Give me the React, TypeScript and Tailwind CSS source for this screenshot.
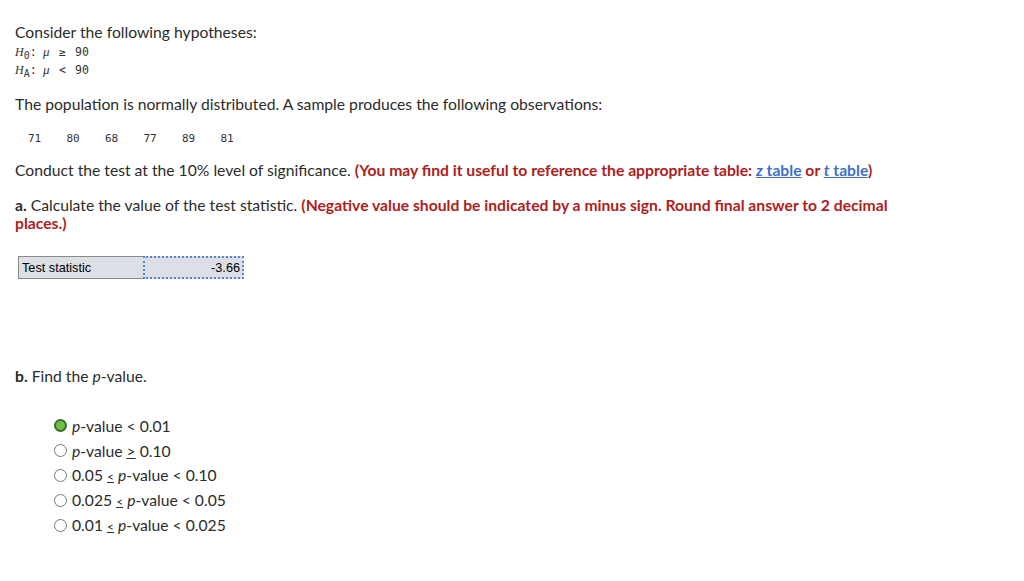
export default function App() {
  const obs = [71, 80, 68, 77, 89, 81];
  const le = <span className="text-[12px] underline">&lt;</span>;
  const options = [
    { key: "a", checked: true, label: <><i>p</i>-value &lt; 0.01</> },
    { key: "b", checked: false, label: <><i>p</i>-value <span className="underline">&gt;</span> 0.10</> },
    { key: "c", checked: false, label: <>0.05 {le} <i>p</i>-value &lt; 0.10</> },
    { key: "d", checked: false, label: <>0.025 {le} <i>p</i>-value &lt; 0.05</> },
    { key: "e", checked: false, label: <>0.01 {le} <i>p</i>-value &lt; 0.025</> },
  ];
  const hyps = [
    { sub: "0", op: "≥" },
    { sub: "A", op: "<" },
  ];

  return (
    <div className="min-h-[581px] w-[1024px] bg-white px-[15px] pt-[22px] text-[15.7px] leading-[20px] text-[#2b2b2b] font-['Lato','Open_Sans',sans-serif]">
      <p>Consider the following hypotheses:</p>
      <div className="mt-[1px] font-['DejaVu_Sans_Mono',monospace] text-[11.5px] leading-[18px] text-[#333]">
        {hyps.map((h) => (
          <div key={h.sub} className="flex items-baseline">
            <span className="w-[28px]">
              <i className="font-['Liberation_Serif',serif] text-[12px]">H</i>
              <sub className="text-[10px]">{h.sub}</sub>:
            </span>
            <i className="w-[16px] font-['Liberation_Serif',serif] text-[13px]">μ</i>
            <span className="w-[16px]">{h.op}</span>
            <span>90</span>
          </div>
        ))}
      </div>

      <p className="mt-[15px]">The population is normally distributed. A sample produces the following observations:</p>

      <div className="mt-[15px] flex pl-[13px] font-['DejaVu_Sans_Mono',monospace] text-[11px] text-[#333]">
        {obs.map((o) => (
          <span key={o} className="w-[38.5px]">{o}</span>
        ))}
      </div>

      <p className="mt-[11px]">
        Conduct the test at the 10% level of significance.{" "}
        <span className="font-bold text-[#ad211c]">
          (You may find it useful to reference the appropriate table:{" "}
          <span className="text-[#3d72c6] underline"><i>z</i> table</span> or{" "}
          <span className="text-[#3d72c6] underline"><i>t</i> table</span>)
        </span>
      </p>

      <p className="mt-[16px] max-w-[900px] leading-[18px]">
        <b>a.</b> Calculate the value of the test statistic.{" "}
        <span className="font-bold text-[#ad211c]">
          (Negative value should be indicated by a minus sign. Round final answer to 2 decimal places.)
        </span>
      </p>

      <div className="mt-[24px] ml-[3px] flex h-[23px] w-[226px] font-['Liberation_Sans',sans-serif] text-[12.7px] text-black">
        <div className="flex w-[125px] items-center border border-r-0 border-[#8a8a8a] bg-[#dcdfe6] pl-[3px]">
          Test statistic
        </div>
        <div className="flex flex-1 items-center justify-end border-2 border-dotted border-[#5a86c8] bg-[#dcdfe6] pr-[2px]">
          -3.66
        </div>
      </div>

      <p className="mt-[87px]">
        <b>b.</b> Find the <i>p</i>-value.
      </p>

      <div className="mt-[27px] ml-[39px] flex flex-col">
        {options.map((o) => (
          <label key={o.key} className="flex h-[25px] items-center gap-[5px]">
            {o.checked ? (
              <span className="h-[13px] w-[13px] rounded-full border-[2px] border-[#3d6b2a] bg-[#6cc04a]" />
            ) : (
              <span className="h-[13px] w-[13px] rounded-full border border-[#777] bg-white" />
            )}
            <span>{o.label}</span>
          </label>
        ))}
      </div>
    </div>
  );
}
